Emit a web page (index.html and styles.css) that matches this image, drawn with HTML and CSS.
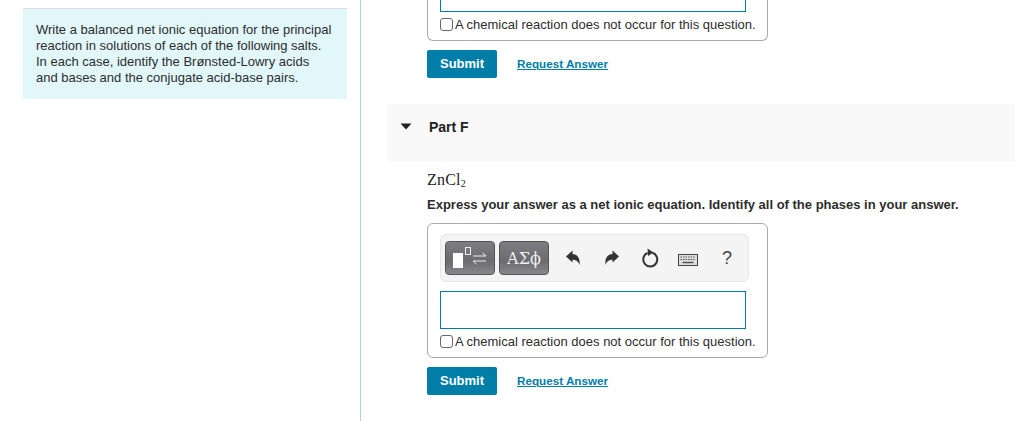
FILE: index.html
```html
<!DOCTYPE html>
<html lang="en">
<head>
<meta charset="utf-8">
<title>Part F</title>
<link rel="stylesheet" href="styles.css">
</head>
<body>
<div class="page">
  <aside class="left">
    <div class="intro">Write a balanced net ionic equation for the principal reaction in solutions of each of the following salts. In each case, identify the Brønsted-Lowry acids and bases and the conjugate acid-base pairs.</div>
  </aside>
  <main class="right">
    <section class="inner">
      <div class="box box-cut">
        <div class="answer answer-cut"></div>
        <label class="check"><span class="cb"></span><span>A chemical reaction does not occur for this question.</span></label>
      </div>
      <div class="actions">
        <button class="submit">Submit</button>
        <a class="req" href="#">Request Answer</a>
      </div>
    </section>
    <header class="part">
      <svg class="caret" width="12" height="7" viewBox="0 0 12 7"><path d="M0.5 0.5H11.5L6 6.5Z" fill="#222"/></svg>
      <span class="part-title">Part F</span>
    </header>
    <section class="inner">
      <p class="formula">ZnCl<sub>2</sub></p>
      <p class="instr">Express your answer as a net ionic equation. Identify all of the phases in your answer.</p>
      <div class="box box-full">
        <div class="toolbar">
          <button class="tbtn">
            <svg width="44" height="24" viewBox="0 0 44 24">
              <rect x="5" y="7" width="10" height="15" fill="#fff"/>
              <rect x="17.500" y="1.500" width="5" height="7" fill="none" stroke="#f0f0f0"/>
              <path d="M25 10H38L34.500 7M38 15H25L28.500 18" fill="none" stroke="#f0f0f0"/>
            </svg>
          </button>
          <button class="tbtn tbtn-text">ΑΣϕ</button>
          <div class="tools">
            <svg class="ico" width="16" height="16" viewBox="0 0 16 16"><path d="M1 6.500L7.500 0.500V4C12 4 15.500 8 14.500 15C13.500 12 11.500 9.800 7.500 9.800V12.500Z" fill="#333"/></svg>
            <svg class="ico ico-redo" width="16" height="16" viewBox="0 0 16 16"><path d="M15 6.500L8.500 0.500V4C4 4 0.500 8 1.500 15C2.500 12 4.500 9.800 8.500 9.800V12.500Z" fill="#333"/></svg>
            <svg class="ico ico-reset" width="18" height="20" viewBox="0 0 18 20"><path d="M6.500 5A7 7 0 1 0 11.500 4.800" fill="none" stroke="#333" stroke-width="2"/><path d="M6.500 0.500L12.500 4.500L7 8Z" fill="#333"/></svg>
            <svg class="ico ico-keys" width="20" height="12" viewBox="0 0 20 12"><rect x="0.500" y="0.500" width="19" height="11" fill="#ddd" stroke="#444"/><path d="M2.500 3H17.500M2.500 5.500H17.500" stroke="#555" stroke-dasharray="1.500 1" fill="none"/><path d="M4.500 8.500H15.500" stroke="#555" stroke-width="1.500"/></svg>
            <span class="help">?</span>
          </div>
        </div>
        <div class="answer"></div>
        <label class="check"><span class="cb"></span><span>A chemical reaction does not occur for this question.</span></label>
      </div>
      <div class="actions">
        <button class="submit">Submit</button>
        <a class="req" href="#">Request Answer</a>
      </div>
    </section>
  </main>
</div>
</body>
</html>
```
FILE: styles.css
```css
* { box-sizing: border-box; }
html, body { margin: 0; padding: 0; height: 100%; overflow: hidden; background: #fff; }
body { font-family: "Liberation Sans", Arial, sans-serif; color: #222; font-size: 13px; }
.page { display: flex; height: 421px; }
.left { width: 361px; flex: none; padding: 8px 13px 0 23px; border-right: 1px solid #b8d0e0; }
.intro { background: #e1f7fa; border-top: 1px solid #dcdcdc; padding: 13px; height: 91px; line-height: 16px; font-size: 13px; color: #2d2d2d; }
.right { flex: 1; min-width: 0; padding-left: 26px; }
.inner { padding-left: 40px; }
.box { width: 341px; border: 1px solid #aaa; border-radius: 6px; padding: 10px 12px 0; }
.box-full { height: 135px; margin-top: 10px; }
.box-cut { border-top: 0; border-radius: 0 0 6px 6px; padding-top: 0; height: 41px; }
.answer { width: 306px; height: 38px; border: 1px solid #007da6; }
.answer-cut { height: 12px; border-top: 0; }
.check { display: flex; align-items: center; height: 16px; margin-top: 4px; font-size: 13px; color: #2d2d2d; white-space: nowrap; }
.cb { width: 13px; height: 13px; border: 1px solid #666; border-radius: 3px; margin: 1px 2px 0 0; background: #fff; flex: none; }
.actions { display: flex; align-items: center; margin-top: 9px; gap: 20px; }
.submit { width: 70px; height: 28px; border: 0; border-radius: 2px; background: #007ea8; color: #fff; font: bold 13px "Liberation Sans", Arial, sans-serif; padding: 0 0 2px; }
.req { color: #007ea8; font-size: 11.700px; font-weight: bold; text-decoration: underline; margin-top: -2px; }
.part { display: flex; align-items: center; height: 57px; margin-top: 26px; background: #f9f9f9; padding: 0 0 12px 13px; }
.caret { display: block; }
.part-title { margin-left: 17px; font-size: 14px; font-weight: bold; color: #222; }
.formula { margin: 9px 0 0; height: 19px; line-height: 19px; font-family: "Liberation Serif", serif; font-size: 16px; letter-spacing: 0.200px; color: #222; }
.formula sub { font-size: 10px; line-height: 0; vertical-align: -2px; }
.instr { margin: 8px 0 0; height: 16px; line-height: 16px; font-size: 13px; font-weight: bold; color: #2d2d2d; white-space: nowrap; }
.toolbar { display: flex; align-items: center; width: 309px; height: 48px; padding-left: 4px; gap: 4px; background: #f4f4f4; border: 1px solid #e6e6e6; border-radius: 6px; margin-bottom: 9px; }
.tbtn { width: 50px; height: 34px; padding: 0; border: 1px solid #555; border-radius: 4px; background: linear-gradient(#7d7d82, #6b6b70 60%, #88888c); color: #eee; display: flex; align-items: center; justify-content: center; }
.tbtn svg { display: block; }
.tbtn-text { font-family: "DejaVu Serif", "Liberation Serif", serif; font-size: 16px; }
.tools { display: flex; align-items: center; flex: 1; margin-left: 12px; }
.ico { display: block; flex: none; }
.ico-redo { margin-left: 23px; }
.ico-reset { margin-left: 21px; }
.ico-keys { margin-left: 19px; margin-top: 4px; }
.help { font-size: 18px; color: #444; margin-left: 24px; }
```
